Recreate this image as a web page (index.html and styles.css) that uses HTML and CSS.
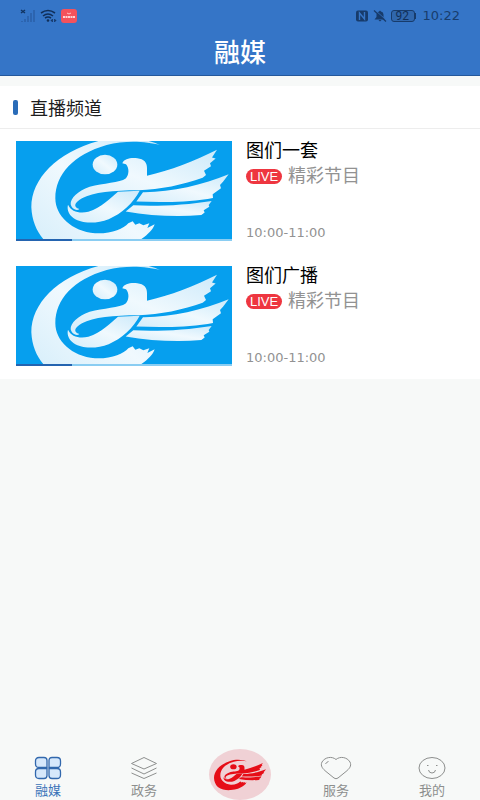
FILE: index.html
```html
<!DOCTYPE html>
<html lang="zh-CN">
<head>
  <meta charset="UTF-8" />
  <title>融媒</title>
  <meta name="viewport" content="width=device-width, initial-scale=1.0">
  <link rel="stylesheet" href="styles.css">
</head>
<body>

  <!-- Shared bird emblem -->
  <svg class="sprite" aria-hidden="true">
    <defs>
      <linearGradient id="feather" x1="0" y1="1" x2="1" y2="0">
        <stop offset="0" stop-color="#d4edfa" />
        <stop offset="0.5" stop-color="#f0f9fe" />
        <stop offset="1" stop-color="#cdeafa" />
      </linearGradient>
      <g id="emblem">
        <path d="M290 12C150 42 64 125 64 215C66 258 82 292 108 318C150 348 205 358 255 354C320 350 365 330 387 314C412 297 428 283 434 265L412 276L418 262L400 268L388 262L376 267L368 256L355 262C340 279 305 294 255 292C185 286 136 240 136 188C136 118 190 58 290 30C345 15 410 19 450 30C410 12 350 2 290 12Z" />
        <ellipse cx="285" cy="88" rx="37" ry="29" />
        <path d="M337 84C342 70 362 67 382 69C402 71 411 82 411 98L411 121C480 106 555 77 621 44L606 67L617 70L600 84L603 93L582 106L588 119L578 127C520 148 450 162 385 164C310 164 250 170 216 188C191 202 190 215 208 220C202 226 186 222 182 206C181 188 202 168 239 154C280 142 330 142 347 129C358 118 358 98 348 87Z" />
        <path d="M174 207C183 228 209 234 235 228C275 217 301 187 324 169L389 166C370 202 335 235 296 250C255 266 207 263 185 242C174 232 171 218 174 207Z" />
        <path d="M399 170C480 171 578 149 656 117L639 139L630 149L633 158L608 176L609 187L593 190C520 201 445 200 379 198Z" />
        <path d="M370 209C440 213 530 208 605 196L596 208L598 213L581 224L584 230L574 238C500 244 420 240 347 227Z" />
      </g>
    </defs>
  </svg>

  <div class="app">
    <header class="topbar">
      <div class="status">
        <div class="status-side">
          <svg class="signal" viewBox="0 0 16 14" aria-hidden="true">
            <path d="M1 1l4 3M5 1L1 4" stroke="#123562" stroke-width="1.5" />
            <path d="M2 12v1M5 10v3M8 7v6M11 4v9M14 1v12" stroke="#2a5fa8" stroke-width="1.5" />
          </svg>
          <svg class="wifi" viewBox="0 0 17 13" aria-hidden="true">
            <path d="M1 4Q8 -1 15 4M3 7Q8 3 13 7M5 9Q8 7 11 9" fill="none" stroke="#102f59" stroke-width="1.6" />
            <circle cx="8" cy="11.5" r="1.3" fill="#102f59" />
            <path d="M11 11.500l1.500-1.500v3zM16 11.500l-1.500-1.500v3z" fill="#102f59" stroke="#102f59" stroke-width=".5" />
          </svg>
          <svg class="app-badge" viewBox="0 0 16 14" aria-hidden="true">
            <rect width="16" height="14" rx="3" fill="#f4525c" />
            <path d="M6 4l2 1 2-1" fill="none" stroke="#ffc5c5" />
            <path d="M2 8h12" stroke="#fff" stroke-width="1.5" stroke-dasharray="2 .5" />
          </svg>
        </div>
        <div class="status-side">
          <svg class="nfc" viewBox="0 0 13 12" aria-hidden="true">
            <rect x=".5" y=".5" width="12" height="11" rx="2" fill="#173b6b" />
            <path d="M4 10V3l5 6V2" fill="none" stroke="#3575c7" stroke-width="1.4" />
          </svg>
          <svg class="bell" viewBox="0 0 13 12" aria-hidden="true">
            <path d="M1 9.500L3 7V4.500Q3 2 5.500 1.500L6.500 .5L7.500 1.500Q10 2 10 4.500V7L12 9.500ZM5 10h3l-1.500 1.500Z" fill="#173b6b" />
            <path d="M2 .5l11 10" stroke="#3575c7" stroke-width="1" />
            <path d="M.5 .5l12 11" stroke="#173b6b" stroke-width="1.200" />
          </svg>
          <span class="battery">92</span>
          <span class="clock">10:22</span>
        </div>
      </div>
      <h1>融媒</h1>
    </header>

    <main>
      <section class="channels">
        <h2>直播频道</h2>
        <ul>
          <li class="channel">
            <div class="cover">
              <svg viewBox="18 18 648 291" preserveAspectRatio="none" role="img" aria-label="图们一套">
                <use href="#emblem" fill="url(#feather)" />
              </svg>
              <div class="track"></div>
            </div>
            <div class="info">
              <h3>图们一套</h3>
              <p class="program"><span class="live">LIVE</span>精彩节目</p>
              <time>10:00-11:00</time>
            </div>
          </li>
          <li class="channel">
            <div class="cover">
              <svg viewBox="18 18 648 291" preserveAspectRatio="none" role="img" aria-label="图们广播">
                <use href="#emblem" fill="url(#feather)" />
              </svg>
              <div class="track"></div>
            </div>
            <div class="info">
              <h3>图们广播</h3>
              <p class="program"><span class="live">LIVE</span>精彩节目</p>
              <time>10:00-11:00</time>
            </div>
          </li>
        </ul>
      </section>
    </main>

    <nav class="tabbar">
      <a class="tab active" href="#media">
        <svg viewBox="0 0 28 24" aria-hidden="true">
          <g fill="#d6e8fb" stroke="#3268ad" stroke-width="1.300">
            <path d="M5 1.500H10Q13 1.500 13 4.500V11.500H5Q1.500 11.500 1.500 8V5Q1.500 1.500 5 1.500Z" />
            <path d="M18 1.500H23Q26.500 1.500 26.500 5V8Q26.500 11.500 23 11.500H15V4.500Q15 1.500 18 1.500Z" />
            <path d="M5 12.500H13V19.500Q13 22.500 10 22.500H5Q1.500 22.500 1.500 19V16Q1.500 12.500 5 12.500Z" />
            <path d="M15 12.500H23Q26.500 12.500 26.500 16V19Q26.500 22.500 23 22.500H18Q15 22.500 15 19.500Z" />
          </g>
        </svg>
        融媒
      </a>
      <a class="tab" href="#gov">
        <svg viewBox="0 0 28 24" aria-hidden="true">
          <path d="M14 1.500L26.500 7.500L14 13L1.500 7.500ZM1.500 12L14 18L26.500 12M1.500 17L14 22.500L26.500 17" />
        </svg>
        政务
      </a>
      <a class="tab-home" href="#home" aria-label="图们">
        <svg viewBox="64 4 592 356" aria-hidden="true">
          <use href="#emblem" fill="#e60d17" />
        </svg>
      </a>
      <a class="tab" href="#service">
        <svg viewBox="0 0 32 24" aria-hidden="true">
          <path d="M16 3.500C20 0 27 1 30 6C32 10 29 13 26 15.500L18 22Q16 23.500 14 22L6 15.500C3 13 0 10 2 6C5 1 12 0 16 3.500ZM5.500 8Q6.500 6 8.500 5.500" />
        </svg>
        服务
      </a>
      <a class="tab" href="#mine">
        <svg viewBox="0 0 28 24" aria-hidden="true">
          <ellipse cx="14" cy="12" rx="13" ry="10.500" />
          <path d="M9 9.500h1.500M18 9.500h1.500M10.500 14Q11 17 14 17Q17 17 17.500 14" />
        </svg>
        我的
      </a>
    </nav>
  </div>

</body>
</html>
```

FILE: styles.css
```css
* {
  box-sizing: border-box;
}

body {
  margin: 0;
  font-family: Roboto, "Noto Sans CJK SC", sans-serif;
  background: #f7f9f8;
  color: #1d1d1d;
}

h1, h2, h3, p, ul {
  margin: 0;
  padding: 0;
  font-weight: 400;
}

svg {
  display: block;
}

.sprite {
  position: absolute;
  width: 0;
  height: 0;
}

.app {
  display: flex;
  flex-direction: column;
  min-height: 100vh;
}

/* Header */
.topbar {
  background: #3575c7;
  border-bottom: 1px solid #24589b;
}

.status {
  display: flex;
  justify-content: space-between;
  height: 31px;
  padding: 0 20px;
}

.status-side {
  display: flex;
  align-items: center;
  gap: 4px;
}

.signal {
  width: 16px;
  height: 14px;
}

.wifi {
  width: 17px;
  height: 13px;
}

.app-badge {
  width: 16px;
  height: 14px;
}

.nfc, .bell {
  width: 14px;
  height: 12px;
}

.battery {
  display: flex;
  align-items: center;
  width: 24px;
  height: 12px;
  padding: 0 4px;
  border: 1px solid #173b6b;
  border-radius: 3px;
  background: #3067ad;
  color: #102f59;
  font-size: 12px;
}

.battery::after {
  content: "";
  flex: none;
  width: 2px;
  height: 6px;
  margin-left: 5px;
  background: #173b6b;
}

.clock {
  margin-left: 4px;
  color: #183d6d;
  font-family: "DejaVu Sans", sans-serif;
  font-size: 13px;
}

h1 {
  color: #fff;
  font-size: 26px;
  font-weight: 500;
  line-height: 44px;
  text-align: center;
}

/* Channel list */
main {
  flex: 1;
}

.channels {
  margin-top: 10px;
  background: #fff;
}

h2 {
  display: flex;
  align-items: center;
  gap: 12px;
  height: 43px;
  padding: 0 13px;
  border-bottom: 1px solid #ededed;
  font-size: 18px;
}

h2::before {
  content: "";
  width: 5px;
  height: 15px;
  border-radius: 2px;
  background: #2a6cb8;
}

ul {
  list-style: none;
}

.channel {
  display: flex;
  gap: 14px;
  padding: 12px 16px 13px;
}

.cover {
  flex: 0 1 216px;
  background: #069fee;
}

.cover svg {
  width: 100%;
  height: 98px;
}

.track {
  height: 2px;
  background: linear-gradient(to right, #2464b0 26%, #8acdf2 26%);
}

.info {
  display: flex;
  flex-direction: column;
}

h3 {
  color: #000;
  font-size: 18px;
  line-height: 20px;
}

.program {
  display: flex;
  align-items: center;
  gap: 6px;
  margin-top: 3px;
  color: #929292;
  font-size: 18px;
  line-height: 24px;
}

.live {
  width: 36px;
  border-radius: 8px;
  background: #ee3640;
  color: #fff;
  font-family: "Liberation Sans", sans-serif;
  font-size: 13px;
  line-height: 15px;
  text-align: center;
}

time {
  margin-top: auto;
  color: #929292;
  font-family: "DejaVu Sans", sans-serif;
  font-size: 13px;
  line-height: 16px;
}

/* Bottom navigation */
.tabbar {
  display: grid;
  grid-template-columns: repeat(5, 1fr);
  align-items: end;
  height: 51px;
}

.tab {
  display: flex;
  flex-direction: column;
  align-items: center;
  gap: 2px;
  color: #8d8f8e;
  font-size: 13px;
  line-height: 18px;
  text-decoration: none;
}

.tab svg {
  height: 24px;
  fill: none;
  stroke: #8d8f8e;
  stroke-width: 1;
}

.tab.active {
  color: #3b74b8;
}

.tab-home {
  display: flex;
  align-items: center;
  justify-content: center;
  justify-self: center;
  width: 62px;
  height: 51px;
  border-radius: 50%;
  background: #f0d1d5;
}

.tab-home svg {
  width: 52px;
  height: 32px;
}
```
